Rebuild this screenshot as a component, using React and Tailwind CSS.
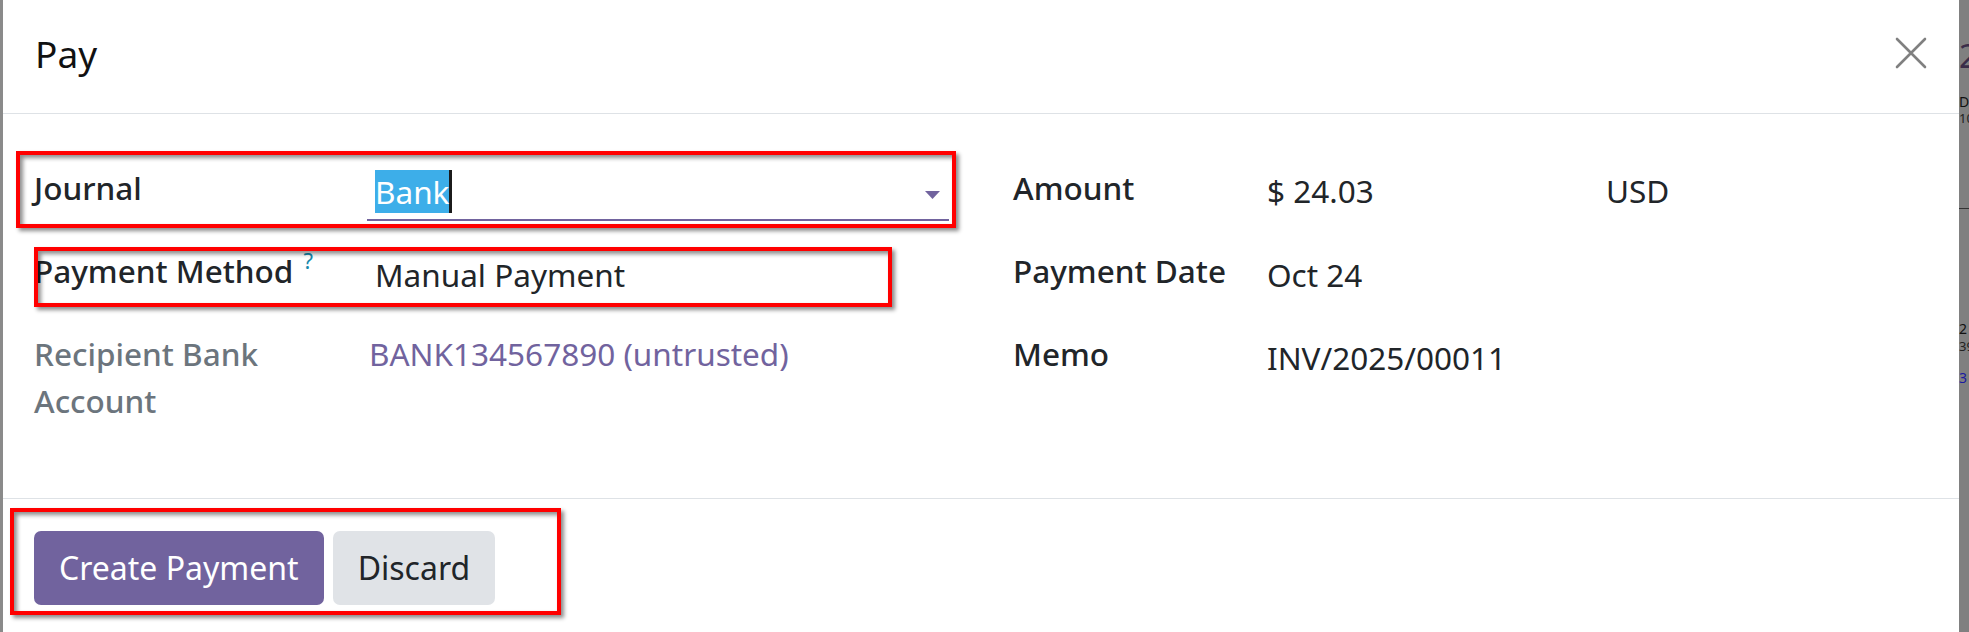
import React from "react";

const font = { fontFamily: '"Noto Sans", "Open Sans", Arial, sans-serif' };

const Label = ({ children, muted }) => (
  <div
    className={`text-[31.5px] font-medium leading-[47px] ${
      muted ? "text-[#6c757d]" : "text-[#212529]"
    }`}
  >
    {children}
  </div>
);

const Value = ({ children, link, className = "" }) => (
  <div
    className={`text-[31.5px] leading-[47px] ${link ? "text-[#71639e]" : "text-[#212529]"} ${className}`}
  >
    {children}
  </div>
);

const Mark = ({ className }) => (
  <div
    className={`pointer-events-none absolute border-[4px] border-[#ff0000] shadow-[3px_3px_4px_rgba(0,0,0,0.45),inset_3px_3px_4px_rgba(0,0,0,0.45)] ${className}`}
  />
);

const App = () => {
  return (
    <div className="flex h-[632px] w-[1969px] overflow-hidden bg-[#808080]" style={font}>
      <div className="w-[3px] bg-[#8a8a8a]" />

      {/* dialog */}
      <div className="relative flex w-[1956px] flex-col bg-white text-[#212529]">
        {/* header */}
        <header className="flex h-[114px] items-start justify-between border-b border-[#dee2e6] pl-[32px] pr-[32px] pt-[26px]">
          <h1 className="text-[37px] leading-[1.5] text-[#111]">Pay</h1>
          <button className="mt-[11px] h-[32px] w-[32px]">
            <svg viewBox="0 0 32 32" className="h-[32px] w-[32px]">
              <path d="M2 2 L30 30 M30 2 L2 30" stroke="#808080" strokeWidth="2.6" strokeLinecap="round" />
            </svg>
          </button>
        </header>

        {/* body */}
        <main className="flex h-[384px] pl-[31px] pt-[50px]">
          {/* left group */}
          <div className="grid w-[979px] grid-cols-[333px_582px] grid-rows-[83px_83px_auto] content-start">
            <Label>Journal</Label>
            <div className="flex h-[57px] items-start justify-between border-b-2 border-[#71639e] pl-[8px] pr-[9px] pt-[4px]">
              <Value>
                <span className="border-r-[3px] border-[#1b1b1b] bg-[#3daee9] text-white">Bank</span>
              </Value>
              <svg viewBox="0 0 15 8" className="mt-[23px] h-[8px] w-[15px]">
                <path d="M0 0 L15 0 L7.5 8 Z" fill="#71639e" />
              </svg>
            </div>

            <Label>
              Payment Method
              <span className="relative -top-[14px] ml-[10px] text-[22px] font-normal leading-none text-[#1789ac]">
                ?
              </span>
            </Label>
            <Value className="pl-[8px] pt-[4px]">Manual Payment</Value>

            <Label muted>
              Recipient Bank
              <br />
              Account
            </Label>
            <Value link className="pl-[2px]">
              BANK134567890 (untrusted)
            </Value>
          </div>

          {/* right group */}
          <div className="grid grid-cols-[254px_auto] grid-rows-[83px_83px_auto] content-start">
            <Label>Amount</Label>
            <Value className="flex pt-[3px]">
              <span className="w-[339px]">$ 24.03</span>
              <span>USD</span>
            </Value>

            <Label>Payment Date</Label>
            <Value className="pt-[4px]">Oct 24</Value>

            <Label>Memo</Label>
            <Value className="pt-[4px]">INV/2025/00011</Value>
          </div>
        </main>

        {/* footer */}
        <footer className="flex flex-1 items-start gap-[9px] border-t border-[#dee2e6] pl-[31px] pt-[32px]">
          <button className="h-[74px] rounded-[7px] bg-[#71639e] px-[25px] text-[32px] text-white">
            Create Payment
          </button>
          <button className="h-[74px] rounded-[7px] bg-[#e0e3e7] px-[25px] text-[32px] text-[#212529]">
            Discard
          </button>
        </footer>

        {/* annotation boxes */}
        <Mark className="left-[13px] top-[151px] h-[77px] w-[940px]" />
        <Mark className="left-[31px] top-[247px] h-[60px] w-[858px]" />
        <Mark className="left-[7px] top-[508px] h-[107px] w-[551px]" />
      </div>

      {/* page behind the dialog */}
      <div className="relative w-[10px] overflow-hidden bg-[#808080]">
        <span className="absolute left-0 top-[40px] text-[32px] leading-none text-[#3a2d49]">2</span>
        <span className="absolute left-0 top-[95px] text-[14px] leading-none text-[#111]">D</span>
        <span className="absolute left-0 top-[112px] text-[13px] leading-none text-[#222]">10</span>
        <div className="absolute left-0 top-[208px] h-[1px] w-[10px] bg-[#333]" />
        <span className="absolute left-0 top-[322px] text-[14px] leading-none text-[#111]">2</span>
        <span className="absolute left-0 top-[340px] text-[13px] leading-none text-[#222]">39</span>
        <span className="absolute left-0 top-[371px] text-[14px] leading-none text-[#1a1aa0]">3</span>
      </div>
    </div>
  );
};

export default App;
